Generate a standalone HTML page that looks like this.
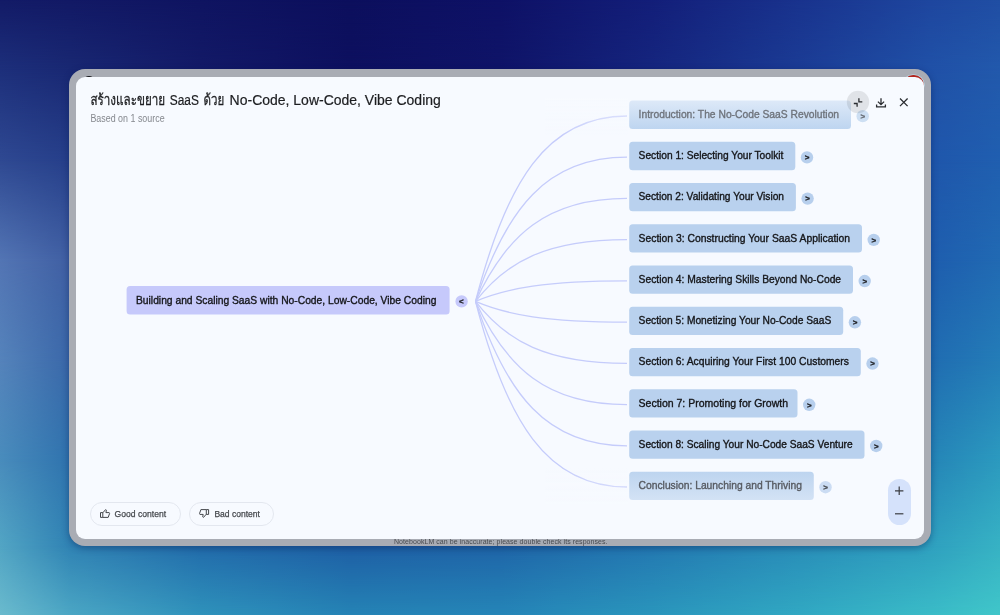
<!DOCTYPE html>
<html lang="th">
<head>
<meta charset="utf-8">
<title>NotebookLM Mind Map</title>
<style>
html,body{margin:0;padding:0}
body{width:1000px;height:615px;overflow:hidden;position:relative;font-family:"Liberation Sans","Loma","Noto Sans Thai",sans-serif;
background:#1e5aae;
}
.abs{position:absolute}
.bgl{position:absolute;left:0;top:0;width:1000px;height:615px}
#frame{left:69.3px;top:68.8px;width:861.4px;height:476.9px;border-radius:16px;background:#a9acb4;box-shadow:0 2px 7px rgba(5,25,80,.4)}
#panel{left:76.3px;top:77.2px;width:848.2px;height:461.8px;border-radius:9px;background:#f7faff;overflow:hidden}
#title{left:90px;top:90px;font-size:14px;line-height:18px;color:#1c1d20;white-space:nowrap}
#sub{left:90px;top:112px;font-size:10px;line-height:14px;color:#8b8e94;white-space:nowrap;letter-spacing:-.49px}
.btn{top:502.1px;height:21.6px;border:1px solid #e3e7ef;border-radius:12px;font-size:9.5px;color:#44474c;letter-spacing:-.46px;white-space:nowrap}
.btn span{position:absolute;top:4.5px;line-height:12px}
#foot{left:393.8px;top:537.4px;font-size:7px;line-height:9px;color:#484b50;white-space:nowrap;letter-spacing:.06px}
#zoom{left:887.8px;top:479.1px;width:22.8px;height:46px;border-radius:11.4px;background:#d5e2fb}
svg text{font-family:"Liberation Sans","Loma","Noto Sans Thai",sans-serif}
svg .nt{stroke-width:.36px;paint-order:stroke fill}
.gs{will-change:transform}
</style>
</head>
<body>
<div class="bgl" style="background:linear-gradient(90deg,#131b67 0.0%,#121965 7.0%,#0f1461 20.0%,#0c0f5d 35.0%,#0e1166 50.0%,#131e79 65.0%,#19338e 80.0%,#1e469f 93.0%,#204ea4 100.0%)"></div>
<div class="bgl" style="background:linear-gradient(90deg,#1d2f7b 0.0%,#192873 7.0%,#131a67 20.0%,#0d105f 35.0%,#0f1468 50.0%,#15257e 65.0%,#1b3c95 80.0%,#2051a7 93.0%,#2259ac 100.0%);-webkit-mask-image:linear-gradient(180deg,transparent 0px,#000 69px);mask-image:linear-gradient(180deg,transparent 0px,#000 69px)"></div>
<div class="bgl" style="background:linear-gradient(90deg,#2f4992 0.0%,#263f8a 7.0%,#1f56ab 93.0%,#205fb0 100.0%);-webkit-mask-image:linear-gradient(180deg,transparent 69px,#000 160px);mask-image:linear-gradient(180deg,transparent 69px,#000 160px)"></div>
<div class="bgl" style="background:linear-gradient(90deg,#5375b4 0.0%,#405fa3 7.0%,#1e5dae 93.0%,#216ab3 100.0%);-webkit-mask-image:linear-gradient(180deg,transparent 160px,#000 260px);mask-image:linear-gradient(180deg,transparent 160px,#000 260px)"></div>
<div class="bgl" style="background:linear-gradient(90deg,#5583bb 0.0%,#3a68a9 7.0%,#206cb1 93.0%,#247db8 100.0%);-webkit-mask-image:linear-gradient(180deg,transparent 260px,#000 360px);mask-image:linear-gradient(180deg,transparent 260px,#000 360px)"></div>
<div class="bgl" style="background:linear-gradient(90deg,#498cbc 0.0%,#2f73ae 7.0%,#2585b7 93.0%,#2c9abf 100.0%);-webkit-mask-image:linear-gradient(180deg,transparent 360px,#000 460px);mask-image:linear-gradient(180deg,transparent 360px,#000 460px)"></div>
<div class="bgl" style="background:linear-gradient(90deg,#52a5c4 0.0%,#3083b4 7.0%,#226cab 20.0%,#1e5fa5 35.0%,#1f65a8 50.0%,#2378b1 65.0%,#298eb9 80.0%,#2fa0bf 93.0%,#37b2c4 100.0%);-webkit-mask-image:linear-gradient(180deg,transparent 460px,#000 546px);mask-image:linear-gradient(180deg,transparent 460px,#000 546px)"></div>
<div class="bgl" style="background:linear-gradient(90deg,#6abacd 0.0%,#4ba6c4 7.0%,#2f92bb 20.0%,#2583b5 35.0%,#2585b7 50.0%,#2a95bc 65.0%,#31a8c2 80.0%,#3abbc7 93.0%,#40c6c9 100.0%);-webkit-mask-image:linear-gradient(180deg,transparent 546px,#000 615px);mask-image:linear-gradient(180deg,transparent 546px,#000 615px)"></div>
<div id="frame" class="abs"></div>
<div class="abs" style="left:84.7px;top:75.8px;width:8.2px;height:6px;border-radius:50%;background:#16171b"></div>
<div class="abs" style="left:903.4px;top:75px;width:20.4px;height:20.4px;border-radius:50%;background:#b3261e;box-shadow:0 0 0 .6px #bfe3f2"></div>
<div id="panel" class="abs"></div>
<div id="zoom" class="abs"></div>
<svg class="abs gs" style="left:0;top:0" width="1000" height="615" viewBox="0 0 1000 615">
<defs>
<linearGradient id="gtop" x1="0" y1="0" x2="0" y2="1"><stop offset="0" stop-color="#dde9f8"/><stop offset="1" stop-color="#bed5f0"/></linearGradient>
<linearGradient id="gbot" x1="0" y1="0" x2="0" y2="1"><stop offset="0" stop-color="#bdd4ef"/><stop offset="1" stop-color="#d3e2f5"/></linearGradient>
<linearGradient id="ftop" x1="0" y1="0" x2="0" y2="1"><stop offset="0" stop-color="#f7faff" stop-opacity=".7"/><stop offset="1" stop-color="#f7faff" stop-opacity="0"/></linearGradient>
<linearGradient id="fbot" x1="0" y1="0" x2="0" y2="1"><stop offset="0" stop-color="#f7faff" stop-opacity="0"/><stop offset="1" stop-color="#f7faff" stop-opacity=".55"/></linearGradient>
</defs>
<path d="M475.5,301.4 C506.4,181.8 546.6,116.0 627.0,116.0" fill="none" stroke="#c5ccfb" stroke-width="1.3"/>
<path d="M475.5,301.4 C506.4,208.4 546.6,157.2 627.0,157.2" fill="none" stroke="#c5ccfb" stroke-width="1.3"/>
<path d="M475.5,301.4 C506.4,235.0 546.6,198.4 627.0,198.4" fill="none" stroke="#c5ccfb" stroke-width="1.3"/>
<path d="M475.5,301.4 C506.4,261.6 546.6,239.6 627.0,239.6" fill="none" stroke="#c5ccfb" stroke-width="1.3"/>
<path d="M475.5,301.4 C506.4,288.2 546.6,280.9 627.0,280.9" fill="none" stroke="#c5ccfb" stroke-width="1.3"/>
<path d="M475.5,301.4 C506.4,314.8 546.6,322.1 627.0,322.1" fill="none" stroke="#c5ccfb" stroke-width="1.3"/>
<path d="M475.5,301.4 C506.4,341.3 546.6,363.3 627.0,363.3" fill="none" stroke="#c5ccfb" stroke-width="1.3"/>
<path d="M475.5,301.4 C506.4,367.9 546.6,404.6 627.0,404.6" fill="none" stroke="#c5ccfb" stroke-width="1.3"/>
<path d="M475.5,301.4 C506.4,394.5 546.6,445.8 627.0,445.8" fill="none" stroke="#c5ccfb" stroke-width="1.3"/>
<path d="M475.5,301.4 C506.4,421.1 546.6,487.0 627.0,487.0" fill="none" stroke="#c5ccfb" stroke-width="1.3"/>
<rect x="545" y="98" width="83" height="38" fill="url(#ftop)"/>
<rect x="545" y="468" width="83" height="36" fill="url(#fbot)"/>
<rect x="629.2" y="100.60" width="221.8" height="28.3" rx="3.5" fill="url(#gtop)"/>
<text class="nt" stroke="#6e737b" x="638.6" y="118.00" font-size="11" fill="#6e737b" textLength="200.5" lengthAdjust="spacingAndGlyphs">Introduction: The No-Code SaaS Revolution</text>
<circle cx="862.7" cy="116.15" r="6.2" fill="#cddff3"/>
<text x="862.8" y="118.95" font-size="8" font-weight="bold" fill="#666b73" stroke="#666b73" stroke-width=".3" text-anchor="middle">&gt;</text>
<rect x="629.2" y="141.83" width="166.1" height="28.3" rx="3.5" fill="#b9d1ee"/>
<text class="nt" stroke="#141518" x="638.6" y="159.23" font-size="11" fill="#141518" textLength="144.8" lengthAdjust="spacingAndGlyphs">Section 1: Selecting Your Toolkit</text>
<circle cx="807.0" cy="157.38" r="6.2" fill="#b7cfed"/>
<text x="807.1" y="160.18" font-size="8" font-weight="bold" fill="#1c1d20" stroke="#1c1d20" stroke-width=".3" text-anchor="middle">&gt;</text>
<rect x="629.2" y="183.06" width="166.7" height="28.3" rx="3.5" fill="#b9d1ee"/>
<text class="nt" stroke="#141518" x="638.6" y="200.46" font-size="11" fill="#141518" textLength="145.4" lengthAdjust="spacingAndGlyphs">Section 2: Validating Your Vision</text>
<circle cx="807.6" cy="198.61" r="6.2" fill="#b7cfed"/>
<text x="807.7" y="201.41" font-size="8" font-weight="bold" fill="#1c1d20" stroke="#1c1d20" stroke-width=".3" text-anchor="middle">&gt;</text>
<rect x="629.2" y="224.29" width="232.8" height="28.3" rx="3.5" fill="#b9d1ee"/>
<text class="nt" stroke="#141518" x="638.6" y="241.69" font-size="11" fill="#141518" textLength="211.5" lengthAdjust="spacingAndGlyphs">Section 3: Constructing Your SaaS Application</text>
<circle cx="873.7" cy="239.84" r="6.2" fill="#b7cfed"/>
<text x="873.8" y="242.64" font-size="8" font-weight="bold" fill="#1c1d20" stroke="#1c1d20" stroke-width=".3" text-anchor="middle">&gt;</text>
<rect x="629.2" y="265.52" width="223.8" height="28.3" rx="3.5" fill="#b9d1ee"/>
<text class="nt" stroke="#141518" x="638.6" y="282.92" font-size="11" fill="#141518" textLength="202.5" lengthAdjust="spacingAndGlyphs">Section 4: Mastering Skills Beyond No-Code</text>
<circle cx="864.7" cy="281.07" r="6.2" fill="#b7cfed"/>
<text x="864.8" y="283.87" font-size="8" font-weight="bold" fill="#1c1d20" stroke="#1c1d20" stroke-width=".3" text-anchor="middle">&gt;</text>
<rect x="629.2" y="306.75" width="214.0" height="28.3" rx="3.5" fill="#b9d1ee"/>
<text class="nt" stroke="#141518" x="638.6" y="324.15" font-size="11" fill="#141518" textLength="192.7" lengthAdjust="spacingAndGlyphs">Section 5: Monetizing Your No-Code SaaS</text>
<circle cx="854.9" cy="322.30" r="6.2" fill="#b7cfed"/>
<text x="855.0" y="325.10" font-size="8" font-weight="bold" fill="#1c1d20" stroke="#1c1d20" stroke-width=".3" text-anchor="middle">&gt;</text>
<rect x="629.2" y="347.98" width="231.6" height="28.3" rx="3.5" fill="#b9d1ee"/>
<text class="nt" stroke="#141518" x="638.6" y="365.38" font-size="11" fill="#141518" textLength="210.3" lengthAdjust="spacingAndGlyphs">Section 6: Acquiring Your First 100 Customers</text>
<circle cx="872.5" cy="363.53" r="6.2" fill="#b7cfed"/>
<text x="872.6" y="366.33" font-size="8" font-weight="bold" fill="#1c1d20" stroke="#1c1d20" stroke-width=".3" text-anchor="middle">&gt;</text>
<rect x="629.2" y="389.21" width="168.3" height="28.3" rx="3.5" fill="#b9d1ee"/>
<text class="nt" stroke="#141518" x="638.6" y="406.61" font-size="11" fill="#141518" textLength="149.4" lengthAdjust="spacingAndGlyphs">Section 7: Promoting for Growth</text>
<circle cx="809.2" cy="404.76" r="6.2" fill="#b7cfed"/>
<text x="809.3" y="407.56" font-size="8" font-weight="bold" fill="#1c1d20" stroke="#1c1d20" stroke-width=".3" text-anchor="middle">&gt;</text>
<rect x="629.2" y="430.44" width="235.3" height="28.3" rx="3.5" fill="#b9d1ee"/>
<text class="nt" stroke="#141518" x="638.6" y="447.84" font-size="11" fill="#141518" textLength="214.0" lengthAdjust="spacingAndGlyphs">Section 8: Scaling Your No-Code SaaS Venture</text>
<circle cx="876.2" cy="445.99" r="6.2" fill="#b7cfed"/>
<text x="876.3" y="448.79" font-size="8" font-weight="bold" fill="#1c1d20" stroke="#1c1d20" stroke-width=".3" text-anchor="middle">&gt;</text>
<rect x="629.2" y="471.67" width="184.6" height="28.3" rx="3.5" fill="url(#gbot)"/>
<text class="nt" stroke="#565a61" x="638.6" y="489.07" font-size="11" fill="#565a61" textLength="163.3" lengthAdjust="spacingAndGlyphs">Conclusion: Launching and Thriving</text>
<circle cx="825.5" cy="487.22" r="6.2" fill="#cbdcf3"/>
<text x="825.6" y="490.02" font-size="8" font-weight="bold" fill="#44484e" stroke="#44484e" stroke-width=".3" text-anchor="middle">&gt;</text>
<rect x="126.6" y="286" width="323" height="28.4" rx="3.5" fill="#c6c9fb"/>
<text class="nt" stroke="#141518" x="136" y="303.9" font-size="11" fill="#141518" textLength="300.4" lengthAdjust="spacingAndGlyphs">Building and Scaling SaaS with No-Code, Low-Code, Vibe Coding</text>
<circle cx="461.6" cy="301.4" r="6.2" fill="#c6c9fb"/>
<text x="461.3" y="304.2" font-size="8" font-weight="bold" fill="#1c1d20" stroke="#1c1d20" stroke-width=".3" text-anchor="middle">&lt;</text>
<text y="104.5" font-size="14" fill="#1c1d20" stroke="#1c1d20" stroke-width=".2" lengthAdjust="spacingAndGlyphs"><tspan x="90.4" textLength="74.8" lengthAdjust="spacingAndGlyphs" font-size="15" stroke-width=".28">สร้างและขยาย</tspan> <tspan x="169.8" textLength="29.1" lengthAdjust="spacingAndGlyphs">SaaS</tspan> <tspan x="203.4" textLength="20.8" lengthAdjust="spacingAndGlyphs" font-size="15" stroke-width=".28">ด้วย</tspan> <tspan x="229.6" textLength="211.2" lengthAdjust="spacingAndGlyphs">No-Code, Low-Code, Vibe Coding</tspan></text>
<text x="90.4" y="121.8" font-size="10" fill="#85888e" textLength="74.2" lengthAdjust="spacingAndGlyphs">Based on 1 source</text>
<!-- top-right icons -->
<circle cx="858" cy="102" r="11.2" fill="#000" fill-opacity=".09"/>
<g fill="none" stroke="#2a2c30" stroke-width="1.3">
<path d="M858.9,98.2 V101.8 H862.3"/>
<path d="M853.8,103.5 H857.1 V106.8"/>
<path d="M881,98.2 V104.4 M877.9,101.6 L881,104.6 L884.1,101.6 M876.6,104.6 V106.9 H885.4 V104.6"/>
<path d="M900,98.5 L907.6,106.1 M907.6,98.5 L900,106.1"/>
</g>
<g fill="none" stroke="#3a3d42" stroke-width="1.2">
<path d="M895,490.8 H903.4 M899.2,486.6 V495"/>
<path d="M895,513.8 H903.4"/>
</g>
<g font-size="9.5" fill="#44474c" stroke="#44474c" stroke-width=".25"><text x="114.6" y="516.8" textLength="51.5" lengthAdjust="spacingAndGlyphs">Good content</text><text x="214.4" y="516.8" textLength="45.6" lengthAdjust="spacingAndGlyphs">Bad content</text></g>
<!-- thumbs -->
<g fill="none" stroke="#44474c" stroke-width="1" stroke-linejoin="round">
<path d="M100.5,512.6 H102.8 V517.4 H100.5 Z M102.8,512.8 L105.6,509.6 L106.4,510.2 L105.9,512.6 H109.2 L109.6,513.4 L108.2,517.4 H102.8"/>
<path d="M208.6,514.4 H206.3 V509.6 H208.6 Z M206.3,514.2 L203.5,517.4 L202.7,516.8 L203.2,514.4 H199.9 L199.5,513.6 L200.9,509.6 H206.3"/>
</g>
</svg>
<div class="abs btn gs" style="left:90.2px;width:88.6px"></div>
<div class="abs btn gs" style="left:189.4px;width:83.2px"></div>
<div id="foot" class="abs gs">NotebookLM can be inaccurate; please double check its responses.</div>
</body>
</html>
